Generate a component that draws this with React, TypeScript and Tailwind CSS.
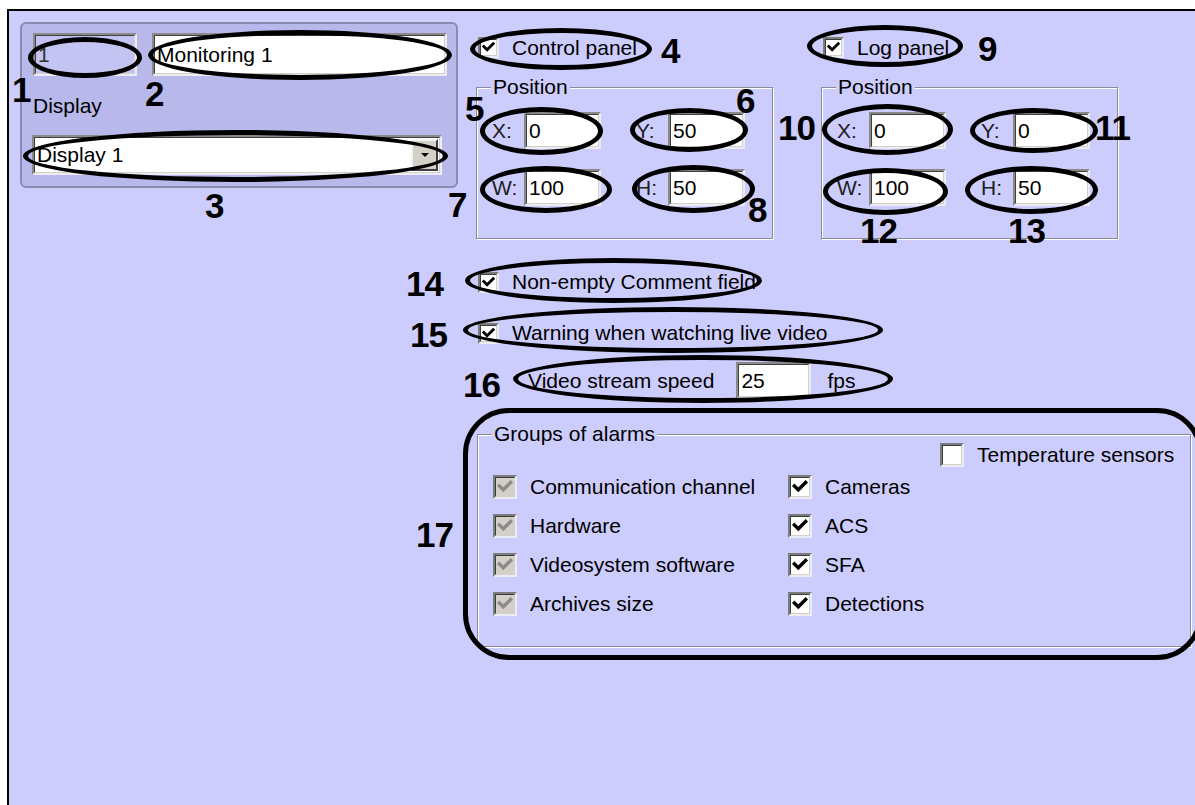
import React from "react";

function Check({ disabled }: { disabled?: boolean }) {
  return (
    <svg viewBox="0 0 16 16" className="w-full h-full block">
      <path
        d="M3 7 L6.5 10.5 L13 4"
        fill="none"
        stroke={disabled ? "#8c8c8c" : "#000"}
        strokeWidth="3"
        strokeLinecap="square"
      />
    </svg>
  );
}

function Box({ checked, disabled, big }: { checked?: boolean; disabled?: boolean; big?: boolean }) {
  return (
    <div
      className={`${big ? "w-[24px] h-[24px]" : "w-[21px] h-[21px]"} shrink-0 border-2 border-t-[#7c7c7c] border-l-[#7c7c7c] border-r-[#ececf4] border-b-[#ececf4]`}
    >
      <div
        className={`w-full h-full border border-t-[#3c3c3c] border-l-[#3c3c3c] border-r-[#d4d0c8] border-b-[#d4d0c8] ${disabled ? "bg-[#d4d0c8]" : "bg-white"}`}
      >
        {checked && <Check disabled={disabled} />}
      </div>
    </div>
  );
}

function Field({ className, value, dim }: { className: string; value: string; dim?: boolean }) {
  return (
    <div
      className={`${className} shrink-0 border-2 border-t-[#8a8a8a] border-l-[#8a8a8a] border-r-[#ececf4] border-b-[#ececf4]`}
    >
      <div
        className={`w-full h-full flex items-center pl-[2px] border border-t-[#404040] border-l-[#404040] border-r-[#d4d0c8] border-b-[#d4d0c8] ${dim ? "bg-[#c4c4f2] text-[#303030]" : "bg-white"}`}
      >
        {value}
      </div>
    </div>
  );
}

function Coord({ l, v }: { l: string; v: string }) {
  return (
    <div className="flex items-center">
      <span className="w-[32px] text-[#202020]">{l}</span>
      <Field className="w-[77px] h-[37px]" value={v} />
    </div>
  );
}

function PanelBlock({ label, vals }: { label: string; vals: string[] }) {
  return (
    <div className="w-[297px]">
      <div className="mt-[26px] ml-[2px] flex items-center gap-[13px] h-[21px]">
        <Box checked />
        <span>{label}</span>
      </div>
      <fieldset className="mt-[17px] border border-[#8a8a94] shadow-[1px_1px_0_#ffffff,inset_1px_1px_0_#ffffff] pb-[32px]">
        <legend className="ml-[14px] px-[2px] leading-[24px] bg-[#cdcdfd]">Position</legend>
        <div className="mt-[13px] pl-[15px] grid grid-cols-[144px_auto] gap-y-[20px]">
          <Coord l="X:" v={vals[0]} />
          <Coord l="Y:" v={vals[1]} />
          <Coord l="W:" v={vals[2]} />
          <Coord l="H:" v={vals[3]} />
        </div>
      </fieldset>
    </div>
  );
}

function Alarm({ label, checked, disabled }: { label: string; checked?: boolean; disabled?: boolean }) {
  return (
    <div className="flex items-center gap-[13px] h-[24px]">
      <Box big checked={checked} disabled={disabled} />
      <span>{label}</span>
    </div>
  );
}

function Oval({ className }: { className: string }) {
  return <div className={`absolute border-[5px] border-black rounded-[50%] pointer-events-none ${className}`} />;
}

function Num({ className, n }: { className: string; n: string }) {
  return (
    <span className={`absolute font-bold text-[35px] leading-[35px] tracking-[-1px] ${className}`}>{n}</span>
  );
}

export default function App() {
  return (
    <div className="relative w-[1195px] h-[805px] overflow-hidden bg-white pt-[9px] pl-[7px] font-['Liberation_Sans',Arial,sans-serif] text-[21px] leading-[24px] text-black">
      <div className="h-[796px] border-t-2 border-l-2 border-black bg-[#cdcdfd] flex items-start">
        {/* left panel */}
        <div className="ml-[11px] mt-[11px] w-[438px] h-[166px] shrink-0 rounded-[6px] border-2 border-[#8b8bb0] bg-[#b8b8ea] pl-[11px]">
          <div className="mt-[9px] flex gap-[15px]">
            <Field className="w-[104px] h-[43px]" value="1" dim />
            <Field className="w-[295px] h-[43px]" value="Monitoring 1" />
          </div>
          <div className="mt-[18px]">Display</div>
          <div className="mt-[17px] -ml-[1px] w-[410px] h-[40px] border-2 border-t-[#8a8a8a] border-l-[#8a8a8a] border-r-[#ececf4] border-b-[#ececf4]">
            <div className="w-full h-full flex items-center bg-white border border-t-[#404040] border-l-[#404040] border-r-[#d4d0c8] border-b-[#d4d0c8]">
              <span className="flex-1 pl-[2px]">Display 1</span>
              <div className="w-[27px] h-[32px] mr-[1px] bg-[#d4d0c8] border-2 border-t-[#f4f4f4] border-l-[#f4f4f4] border-r-[#404040] border-b-[#404040] flex items-center justify-center">
                <svg width="10" height="6" viewBox="0 0 10 6">
                  <path d="M1 1 L9 1 L5 5 Z" fill="#000" />
                </svg>
              </div>
            </div>
          </div>
        </div>

        {/* right column */}
        <div className="ml-[18px] flex flex-col">
          <div className="flex gap-[48px]">
            <PanelBlock label="Control panel" vals={["0", "50", "100", "50"]} />
            <PanelBlock label="Log panel" vals={["0", "0", "100", "50"]} />
          </div>

          <div className="mt-[31px] ml-[2px] flex items-center gap-[13px] h-[24px]">
            <Box checked />
            <span>Non-empty Comment field</span>
          </div>
          <div className="mt-[27px] ml-[2px] flex items-center gap-[13px] h-[24px]">
            <Box checked />
            <span>Warning when watching live video</span>
          </div>
          <div className="mt-[17px] ml-[52px] flex items-center h-[37px]">
            <span>Video stream speed</span>
            <Field className="ml-[22px] w-[75px] h-[37px]" value="25" />
            <span className="ml-[16px]">fps</span>
          </div>

          <fieldset className="mt-[23px] ml-[1px] w-[714px] border border-[#8a8a94] shadow-[1px_1px_0_#ffffff,inset_1px_1px_0_#ffffff] pb-[30px]">
            <legend className="ml-[14px] px-[2px] leading-[24px] bg-[#cdcdfd]">Groups of alarms</legend>
            <div className="-mt-[4px] pl-[462px] flex items-center gap-[13px] h-[25px]">
              <Box big />
              <span>Temperature sensors</span>
            </div>
            <div className="mt-[8px] ml-[15px] grid grid-cols-[295px_auto] gap-y-[15px]">
              <Alarm label="Communication channel" checked disabled />
              <Alarm label="Cameras" checked />
              <Alarm label="Hardware" checked disabled />
              <Alarm label="ACS" checked />
              <Alarm label="Videosystem software" checked disabled />
              <Alarm label="SFA" checked />
              <Alarm label="Archives size" checked disabled />
              <Alarm label="Detections" checked />
            </div>
          </fieldset>
        </div>
      </div>

      {/* annotations */}
      <Oval className="left-[28px] top-[37px] w-[114px] h-[41px]" />
      <Oval className="left-[148px] top-[30px] w-[304px] h-[50px]" />
      <Oval className="left-[23px] top-[130px] w-[425px] h-[52px]" />
      <Oval className="left-[470px] top-[28px] w-[182px] h-[42px]" />
      <Oval className="left-[480px] top-[107px] w-[123px] h-[48px]" />
      <Oval className="left-[630px] top-[108px] w-[118px] h-[44px]" />
      <Oval className="left-[480px] top-[166px] w-[132px] h-[47px]" />
      <Oval className="left-[632px] top-[165px] w-[123px] h-[48px]" />
      <Oval className="left-[807px] top-[25px] w-[156px] h-[42px]" />
      <Oval className="left-[822px] top-[104px] w-[131px] h-[51px]" />
      <Oval className="left-[970px] top-[108px] w-[128px] h-[45px]" />
      <Oval className="left-[823px] top-[168px] w-[125px] h-[47px]" />
      <Oval className="left-[965px] top-[166px] w-[133px] h-[48px]" />
      <Oval className="left-[465px] top-[258px] w-[297px] h-[45px]" />
      <Oval className="left-[463px] top-[307px] w-[420px] h-[46px]" />
      <Oval className="left-[513px] top-[355px] w-[380px] h-[48px]" />
      <div className="absolute left-[463px] top-[408px] w-[740px] h-[252px] border-[5px] border-black rounded-[46px] pointer-events-none" />

      <Num className="left-[12px] top-[72px]" n="1" />
      <Num className="left-[145px] top-[76px]" n="2" />
      <Num className="left-[205px] top-[188px]" n="3" />
      <Num className="left-[661px] top-[33px]" n="4" />
      <Num className="left-[465px] top-[91px]" n="5" />
      <Num className="left-[736px] top-[83px]" n="6" />
      <Num className="left-[448px] top-[187px]" n="7" />
      <Num className="left-[748px] top-[192px]" n="8" />
      <Num className="left-[978px] top-[31px]" n="9" />
      <Num className="left-[778px] top-[110px]" n="10" />
      <Num className="left-[1095px] top-[110px]" n="11" />
      <Num className="left-[860px] top-[213px]" n="12" />
      <Num className="left-[1008px] top-[213px]" n="13" />
      <Num className="left-[406px] top-[266px]" n="14" />
      <Num className="left-[410px] top-[317px]" n="15" />
      <Num className="left-[463px] top-[367px]" n="16" />
      <Num className="left-[416px] top-[517px]" n="17" />
    </div>
  );
}
